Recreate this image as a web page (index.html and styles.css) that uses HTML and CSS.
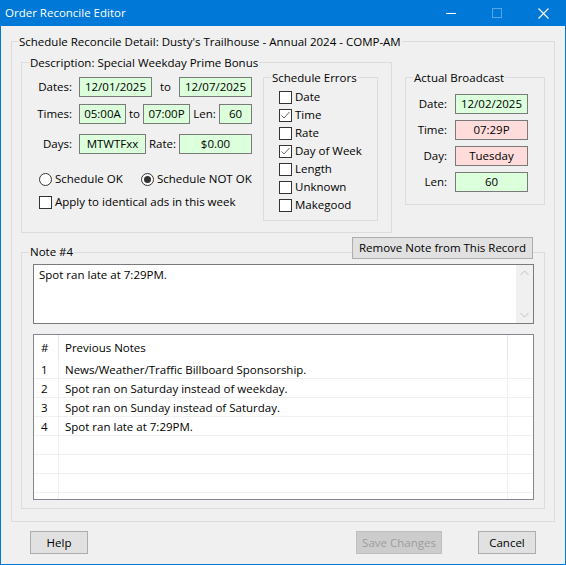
FILE: index.html
```html
<!DOCTYPE html>
<html>
<head>
<meta charset="utf-8">
<title>Order Reconcile Editor</title>
<link rel="stylesheet" href="styles.css">
</head>
<body>
<div class="window">
  <div class="titlebar">
    <span class="wtitle">Order Reconcile Editor</span>
    <div class="controls">
      <span class="ctl"><svg width="10" height="10" viewBox="0 0 10 10"><line x1="0" y1="5.5" x2="10" y2="5.5" stroke="#fff" stroke-width="1"/></svg></span>
      <span class="ctl"><svg width="10" height="10" viewBox="0 0 10 10"><rect x="0.5" y="0.5" width="9" height="9" fill="none" stroke="#56a5e6" stroke-width="1"/></svg></span>
      <span class="ctl"><svg width="11" height="11" viewBox="0 0 11 11"><path d="M0.5 0.5 L10.5 10.5 M10.5 0.5 L0.5 10.5" stroke="#fff" stroke-width="1.1"/></svg></span>
    </div>
  </div>
  <div class="client">
    <div class="group outer">
      <div class="gtitle">Schedule Reconcile Detail: Dusty's Trailhouse - Annual 2024 - COMP-AM</div>
      <div class="toprow">
        <div class="group desc">
          <div class="gtitle">Description: Special Weekday Prime Bonus</div>
          <div class="descbody">
            <div class="fields">
              <div class="frow">
                <span class="lbl">Dates:</span>
                <span class="field green w73">12/01/2025</span>
                <span class="sep s27">to</span>
                <span class="field green w73">12/07/2025</span>
              </div>
              <div class="frow r2">
                <span class="lbl">Times:</span>
                <span class="field green w47">05:00A</span>
                <span class="sep s17">to</span>
                <span class="field green w47">07:00P</span>
                <span class="sep s29">Len:</span>
                <span class="field green w33">60</span>
              </div>
              <div class="frow r3">
                <span class="lbl">Days:</span>
                <span class="field green w67">MTWTFxx</span>
                <span class="sep s33">Rate:</span>
                <span class="field green w73">$0.00</span>
              </div>
              <div class="radios">
                <span class="opt ok"><svg width="13" height="13" viewBox="0 0 13 13"><circle cx="6.5" cy="6.5" r="6" fill="#fff" stroke="#333"/></svg>Schedule OK</span>
                <span class="opt"><svg width="13" height="13" viewBox="0 0 13 13"><circle cx="6.5" cy="6.5" r="6" fill="#fff" stroke="#333"/><circle cx="6.5" cy="6.5" r="3.5" fill="#333"/></svg>Schedule NOT OK</span>
              </div>
              <div class="apply">
                <span class="opt"><svg width="13" height="13" viewBox="0 0 13 13"><rect x="0.5" y="0.5" width="12" height="12" fill="#fff" stroke="#333"/></svg>Apply to identical ads in this week</span>
              </div>
            </div>
            <div class="group errors">
              <div class="gtitle">Schedule Errors</div>
              <div class="elist">
                <div class="echk"><svg width="13" height="13" viewBox="0 0 13 13"><rect x="0.5" y="0.5" width="12" height="12" fill="#fff" stroke="#333"/></svg>Date</div>
                <div class="echk"><svg width="13" height="13" viewBox="0 0 13 13"><rect x="0.5" y="0.5" width="12" height="12" fill="#fff" stroke="#333"/><polyline points="2.5,6.5 5,9 10.5,3" fill="none" stroke="#666" stroke-width="1"/></svg>Time</div>
                <div class="echk"><svg width="13" height="13" viewBox="0 0 13 13"><rect x="0.5" y="0.5" width="12" height="12" fill="#fff" stroke="#333"/></svg>Rate</div>
                <div class="echk"><svg width="13" height="13" viewBox="0 0 13 13"><rect x="0.5" y="0.5" width="12" height="12" fill="#fff" stroke="#333"/><polyline points="2.5,6.5 5,9 10.5,3" fill="none" stroke="#666" stroke-width="1"/></svg>Day of Week</div>
                <div class="echk"><svg width="13" height="13" viewBox="0 0 13 13"><rect x="0.5" y="0.5" width="12" height="12" fill="#fff" stroke="#333"/></svg>Length</div>
                <div class="echk"><svg width="13" height="13" viewBox="0 0 13 13"><rect x="0.5" y="0.5" width="12" height="12" fill="#fff" stroke="#333"/></svg>Unknown</div>
                <div class="echk"><svg width="13" height="13" viewBox="0 0 13 13"><rect x="0.5" y="0.5" width="12" height="12" fill="#fff" stroke="#333"/></svg>Makegood</div>
              </div>
            </div>
          </div>
        </div>
        <div class="group actual">
          <div class="gtitle">Actual Broadcast</div>
          <div class="alist">
            <div class="arow"><span class="albl">Date:</span><span class="field green w73">12/02/2025</span></div>
            <div class="arow"><span class="albl">Time:</span><span class="field pink w73">07:29P</span></div>
            <div class="arow"><span class="albl">Day:</span><span class="field pink w73">Tuesday</span></div>
            <div class="arow"><span class="albl">Len:</span><span class="field green w73">60</span></div>
          </div>
        </div>
      </div>
      <div class="group note">
        <div class="ntitle">
          <span class="gtitle nt">Note #4</span>
          <span class="btn remove">Remove Note from This Record</span>
        </div>
        <div class="memo">
          <div class="memo-text">Spot ran late at 7:29PM.</div>
          <div class="vscroll">
            <span class="arrow"><svg width="17" height="17" viewBox="0 0 17 17"><polyline points="4.5,10 8.5,6 12.5,10" fill="none" stroke="#c0c0c0" stroke-width="1"/></svg></span>
            <span class="arrow"><svg width="17" height="17" viewBox="0 0 17 17"><polyline points="4.5,7 8.5,11 12.5,7" fill="none" stroke="#c0c0c0" stroke-width="1"/></svg></span>
          </div>
        </div>
        <div class="list">
          <div class="lh">
            <span class="c1 hc">#</span>
            <span class="c2 hc">Previous Notes</span>
            <span class="c3"></span>
          </div>
          <div class="lr"><span class="c1">1</span><span class="c2">News/Weather/Traffic Billboard Sponsorship.</span><span class="c3"></span></div>
          <div class="lr"><span class="c1">2</span><span class="c2">Spot ran on Saturday instead of weekday.</span><span class="c3"></span></div>
          <div class="lr"><span class="c1">3</span><span class="c2">Spot ran on Sunday instead of Saturday.</span><span class="c3"></span></div>
          <div class="lr"><span class="c1">4</span><span class="c2">Spot ran late at 7:29PM.</span><span class="c3"></span></div>
          <div class="lr"><span class="c1"></span><span class="c2"></span><span class="c3"></span></div>
          <div class="lr"><span class="c1"></span><span class="c2"></span><span class="c3"></span></div>
          <div class="lr"><span class="c1"></span><span class="c2"></span><span class="c3"></span></div>
          <div class="lr"><span class="c1"></span><span class="c2"></span><span class="c3"></span></div>
        </div>
      </div>
    </div>
    <div class="buttons">
      <span class="btn help">Help</span>
      <span class="btn save disabled">Save Changes</span>
      <span class="btn cancel">Cancel</span>
    </div>
  </div>
</div>
</body>
</html>
```

FILE: styles.css
```css
* { box-sizing: border-box; }
html, body { margin: 0; padding: 0; }
body {
  width: 566px;
  height: 565px;
  overflow: hidden;
  background: #f0f0f0;
  font-family: "Open Sans", "Noto Sans", sans-serif;
  font-size: 11.5px;
  line-height: 16px;
  color: #000;
}
svg { display: block; flex: none; }

.window { width: 566px; height: 565px; display: flex; flex-direction: column; }

.titlebar {
  height: 26px;
  flex: none;
  background: #0078d7;
  color: #fff;
  display: flex;
  align-items: center;
  padding-left: 5px;
}
.wtitle { line-height: 16px; }
.controls { margin-left: auto; display: flex; height: 26px; }
.ctl { width: 46px; height: 26px; display: flex; align-items: center; justify-content: center; }

.client {
  flex: 1;
  border: 1px solid #0078d7;
  border-top: 0;
  display: flex;
  flex-direction: column;
}

.group { border: 1px solid #dcdcdc; display: flex; flex-direction: column; flex: none; }
.gtitle {
  align-self: flex-start;
  margin: -8px 0 0 7px;
  padding: 0 1px;
  background: #f0f0f0;
  line-height: 16px;
  white-space: nowrap;
}

.outer { margin: 15px 0 0 10px; width: 544px; height: 481px; }
.outer > .gtitle { margin-left: 6px; }

.toprow { display: flex; align-items: flex-start; margin-top: 12px; padding-left: 9px; }
.desc { width: 371px; height: 171px; }
.actual { width: 140px; height: 128px; margin: 15px 0 0 13px; }

.descbody { display: flex; align-items: flex-start; margin-top: 6px; padding-left: 8px; }
.fields { width: 222px; flex: none; }

.frow { display: flex; align-items: center; height: 20px; }
.r2 { margin-top: 7px; }
.r3 { margin-top: 10px; }
.lbl { width: 42px; text-align: right; margin-right: 7px; flex: none; }
.sep { text-align: center; flex: none; }
.s17 { width: 17px; }
.s27 { width: 27px; }
.s29 { width: 29px; }
.s33 { width: 33px; }

.field {
  display: block;
  flex: none;
  height: 20px;
  border: 1px solid #7a7a7a;
  text-align: center;
  line-height: 18px;
  white-space: nowrap;
  overflow: hidden;
}
.green { background: #dcffdc; }
.pink { background: #ffdcdc; }
.w33 { width: 33px; }
.w47 { width: 47px; }
.w67 { width: 67px; }
.w73 { width: 73px; }

.radios { display: flex; align-items: center; height: 16px; margin-top: 17px; padding-left: 9px; }
.apply { display: flex; align-items: center; height: 16px; margin-top: 7px; padding-left: 9px; }
.opt { display: flex; align-items: center; gap: 3px; white-space: nowrap; }
.opt.ok { width: 102px; }

.errors { width: 115px; height: 144px; margin-left: 11px; }
.elist { margin-top: 2px; padding-left: 15px; }
.echk { display: flex; align-items: center; gap: 3px; height: 18px; white-space: nowrap; }

.alist { margin-top: 8px; display: flex; flex-direction: column; gap: 6px; }
.arow { display: flex; align-items: center; height: 20px; }
.albl { width: 41px; text-align: right; margin-right: 8px; flex: none; }

.note { margin: 19px 0 0 9px; width: 524px; height: 257px; }
.ntitle { display: flex; align-items: flex-start; margin-top: -16px; }
.ntitle .nt { margin: 7px 0 0 7px; }

.btn {
  display: block;
  flex: none;
  height: 23px;
  border: 1px solid #adadad;
  background: #e1e1e1;
  text-align: center;
  line-height: 21px;
  white-space: nowrap;
}
.remove { width: 181px; height: 22px; line-height: 20px; margin: 0 11px 0 auto; }

.memo {
  display: flex;
  margin: 4px 10px 0 11px;
  height: 60px;
  border: 1px solid #7a7a7a;
  background: #fff;
}
.memo-text { flex: 1; padding: 2px 5px; }
.vscroll {
  width: 17px;
  flex: none;
  background: #f0f0f0;
  display: flex;
  flex-direction: column;
  justify-content: space-between;
}
.arrow { width: 17px; height: 17px; }

.list {
  margin: 10px 10px 0 11px;
  height: 166px;
  border: 1px solid #828790;
  background: #fff;
  overflow: hidden;
}
.lh { display: flex; height: 25px; align-items: stretch; }
.lh .hc { line-height: 25px; border-right: 1px solid #e5e5e5; }
.lr { display: flex; height: 19px; border-bottom: 1px solid #f0f0f0; line-height: 18px; }
.c1 { width: 25px; padding-left: 7px; flex: none; }
.c2 { width: 449px; padding-left: 6px; flex: none; white-space: nowrap; }
.c3 { flex: 1; }
.lr .c1, .lr .c2 { border-right: 1px solid #f0f0f0; }
.lr span { padding-top: 1px; }

.buttons { display: flex; margin-top: 9px; padding: 0 29px; }
.help { width: 58px; }
.save { width: 86px; margin-left: auto; }
.cancel { width: 58px; margin-left: 36px; }
.disabled { background: #cccccc; border-color: #bfbfbf; color: #9d9d9d; }
```
